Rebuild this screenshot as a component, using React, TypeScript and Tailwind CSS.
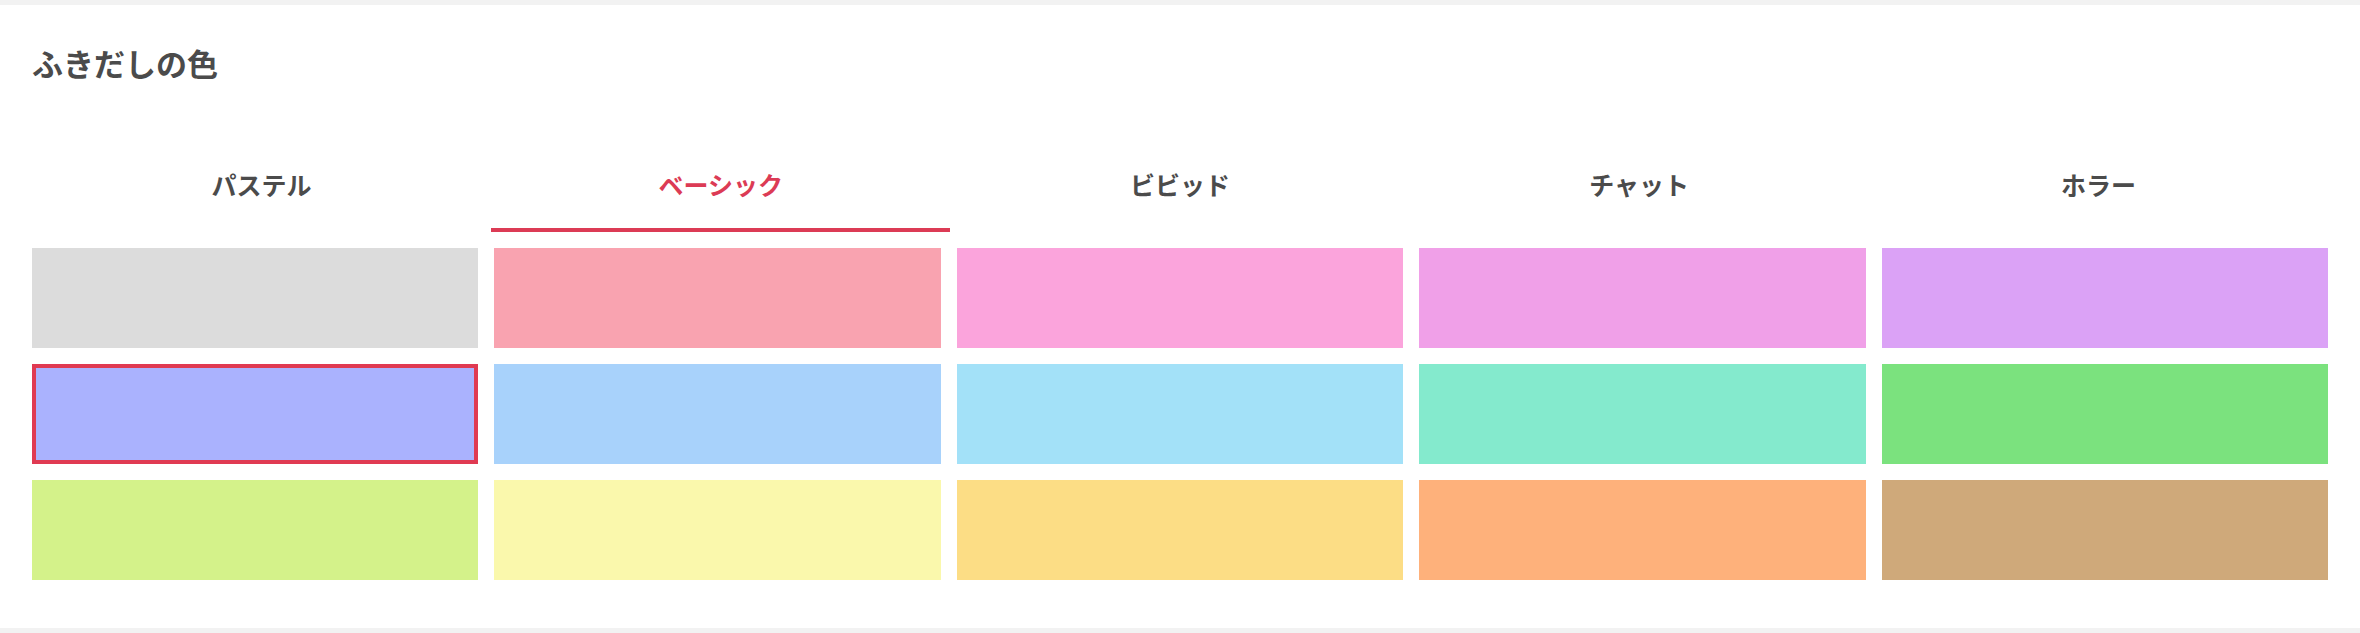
import React from "react";

const tabs = ["パステル", "ベーシック", "ビビッド", "チャット", "ホラー"];
const colors = [
  "bg-[#dcdcdc]",
  "bg-[#f9a3b0]",
  "bg-[#fba4dc]",
  "bg-[#f0a0e8]",
  "bg-[#dba2f6]",
  "bg-[#aab2fe]",
  "bg-[#a8d2fb]",
  "bg-[#a3e1f8]",
  "bg-[#84eacd]",
  "bg-[#7be27e]",
  "bg-[#d4f28a]",
  "bg-[#faf8ac]",
  "bg-[#fcdd85]",
  "bg-[#feb17b]",
  "bg-[#cfa97a]",
];

export default function App() {
  return (
    <div
      className="bg-[#f2f2f2] py-[5px]"
      style={{ fontFamily: '"Noto Sans CJK JP", "Noto Sans", sans-serif' }}
    >
      <div className="bg-white px-[32px] pt-[36px] pb-[48px]">
        <h2 className="text-[31px] leading-[44px] font-bold text-[#4b4b4b]">ふきだしの色</h2>
        <div className="mt-[81px] grid grid-cols-5">
          {tabs.map((t, i) => (
            <div
              key={t}
              className={
                i === 1
                  ? "flex justify-center pb-[26px] border-b-4 border-[#dc3b55] text-[#dc3b55]"
                  : "flex justify-center pb-[26px] border-b-4 border-transparent text-[#4b4b4b]"
              }
            >
              <span className="text-[25px] leading-[36px] font-bold">{t}</span>
            </div>
          ))}
        </div>
        <div className="mt-4 grid grid-cols-5 gap-4">
          {colors.map((c, i) => (
            <div
              key={i}
              className={
                i === 5
                  ? `h-[100px] ${c} border-4 border-[#e03a52]`
                  : `h-[100px] ${c}`
              }
            />
          ))}
        </div>
      </div>
    </div>
  );
}
